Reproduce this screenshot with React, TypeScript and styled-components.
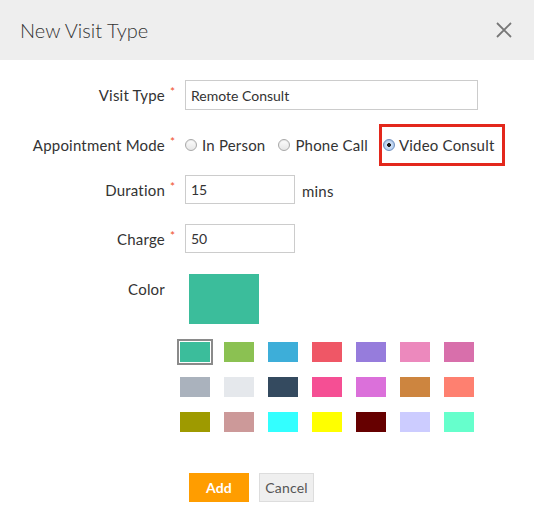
import React, { useState } from "react";
import styled, { createGlobalStyle } from "styled-components";

const GlobalStyle = createGlobalStyle`
  html, body {
    margin: 0;
    padding: 0;
    background: #fff;
  }
  body {
    font-family: Lato, "Open Sans", sans-serif;
    font-size: 15px;
    letter-spacing: 0.2px;
    color: #333;
  }
`;

const Dialog = styled.div`
  width: 534px;
  height: 519px;
  background: #fff;
  overflow: hidden;
`;

const Header = styled.div`
  height: 60px;
  background: #eeeeee;
  display: flex;
  align-items: center;
  justify-content: space-between;
  padding: 0 20px;
  box-sizing: border-box;
`;

const Title = styled.h2`
  margin: 0;
  font-size: 20px;
  font-weight: 300;
  color: #333;
  letter-spacing: 0;
`;

const Close = styled.button`
  width: 18px;
  height: 18px;
  padding: 0;
  margin-right: 1px;
  border: none;
  background: none;
  cursor: pointer;
  display: flex;
  align-items: center;
  justify-content: center;
`;

const Body = styled.div`
  padding-top: 20px;
  display: flex;
  flex-direction: column;
`;

const Row = styled.div<{ $height: number; $gap: number; $top?: boolean }>`
  display: flex;
  align-items: ${(p) => (p.$top ? "flex-start" : "center")};
  height: ${(p) => p.$height}px;
  margin-bottom: ${(p) => p.$gap}px;
`;

const Label = styled.label<{ $top?: boolean }>`
  width: 165px;
  text-align: right;
  line-height: ${(p) => (p.$top ? "30px" : "normal")};
  flex-shrink: 0;
`;

const Star = styled.span`
  width: 20px;
  padding-left: 5px;
  box-sizing: border-box;
  color: #f0502a;
  font-size: 12px;
  align-self: center;
  margin-top: -7px;
  flex-shrink: 0;
`;

const NoStar = styled.span`
  width: 20px;
  flex-shrink: 0;
`;

const TextInput = styled.input<{ $width: number }>`
  width: ${(p) => p.$width}px;
  height: 100%;
  box-sizing: border-box;
  border: 1px solid #cccccc;
  padding: 0 5px;
  font-family: Lato, sans-serif;
  font-size: 14px;
  letter-spacing: 0;
  color: #333;
  outline: none;
`;

const Unit = styled.span`
  margin-left: 7px;
  margin-top: 2px;
`;

const RadioGroup = styled.div`
  display: flex;
  align-items: center;
`;

const RadioOption = styled.label<{ $marked?: boolean }>`
  display: flex;
  align-items: center;
  gap: 5px;
  margin-right: 13px;
  cursor: pointer;
  ${(p) =>
    p.$marked &&
    `
    gap: 4px;
    border: 3px solid #e3281c;
    padding: 9px 7px 9px 1px;
    margin: -7px 0 -6px -2px;
  `}
`;

const RadioDot = styled.span<{ $checked: boolean }>`
  width: 12px;
  height: 12px;
  box-sizing: border-box;
  border-radius: 50%;
  border: 1px solid ${(p) => (p.$checked ? "#6e8fbf" : "#a8a8a8")};
  background: ${(p) =>
    p.$checked
      ? "radial-gradient(circle, #1b1b1b 0 1.6px, #cfe0f6 2.2px, #9fc0ea 100%)"
      : "linear-gradient(#fdfdfd, #e6e6e6)"};
  box-shadow: inset 0 1px 1px rgba(0, 0, 0, 0.08);
  flex-shrink: 0;
`;

const Preview = styled.div<{ $color: string }>`
  width: 70px;
  height: 50px;
  margin-left: 4px;
  background: ${(p) => p.$color};
`;

const Palette = styled.div`
  display: grid;
  grid-template-columns: repeat(7, 30px);
  column-gap: 14px;
  row-gap: 15px;
  padding-left: 180px;
  margin-bottom: 41px;
`;

const Swatch = styled.button<{ $color: string; $selected: boolean }>`
  width: 30px;
  height: 20px;
  padding: 0;
  border: none;
  cursor: pointer;
  background: ${(p) => p.$color};
  box-shadow: ${(p) =>
    p.$selected ? "0 0 0 1px #fff, 0 0 0 3px #8a8a8a" : "none"};
`;

const Actions = styled.div`
  display: flex;
  gap: 10px;
  padding-left: 189px;
`;

const Button = styled.button<{ $primary?: boolean }>`
  height: 29px;
  padding: 0;
  font-family: Lato, sans-serif;
  font-size: 14px;
  letter-spacing: 0.2px;
  cursor: pointer;
  width: ${(p) => (p.$primary ? 60 : 55)}px;
  border: ${(p) => (p.$primary ? "none" : "1px solid #dddddd")};
  background: ${(p) => (p.$primary ? "#ff9d00" : "#efefef")};
  color: ${(p) => (p.$primary ? "#fff" : "#555")};
  font-weight: ${(p) => (p.$primary ? 700 : 400)};
`;

const COLORS = [
  "#3bbd9b", "#8bc152", "#3daed9", "#ef5766", "#967cdc", "#ec89bd", "#d86fab",
  "#aab2bd", "#e5e8ec", "#344a5f", "#f54f94", "#db70da", "#cd853f", "#fe8070",
  "#9e9a00", "#cc9999", "#33ffff", "#ffff00", "#660000", "#ccccff", "#66ffcc",
];

const MODES = ["In Person", "Phone Call", "Video Consult"];

export default function App() {
  const [mode, setMode] = useState("Video Consult");
  const [color, setColor] = useState(COLORS[0]);

  return (
    <Dialog>
      <GlobalStyle />
      <Header>
        <Title>New Visit Type</Title>
        <Close aria-label="Close">
          <svg width="16" height="16" viewBox="0 0 16 16">
            <path d="M1 1L15 15M15 1L1 15" stroke="#777" strokeWidth="1.8" />
          </svg>
        </Close>
      </Header>
      <Body>
        <Row $height={30} $gap={20}>
          <Label>Visit Type</Label>
          <Star>*</Star>
          <TextInput $width={293} defaultValue="Remote Consult" />
        </Row>
        <Row $height={30} $gap={15}>
          <Label>Appointment Mode</Label>
          <Star>*</Star>
          <RadioGroup>
            {MODES.map((m) => (
              <RadioOption
                key={m}
                $marked={m === "Video Consult"}
                onClick={() => setMode(m)}
              >
                <RadioDot $checked={mode === m} />
                {m}
              </RadioOption>
            ))}
          </RadioGroup>
        </Row>
        <Row $height={29} $gap={20}>
          <Label>Duration</Label>
          <Star>*</Star>
          <TextInput $width={110} defaultValue="15" />
          <Unit>mins</Unit>
        </Row>
        <Row $height={29} $gap={21}>
          <Label>Charge</Label>
          <Star>*</Star>
          <TextInput $width={110} defaultValue="50" />
        </Row>
        <Row $height={50} $gap={18} $top>
          <Label $top>Color</Label>
          <NoStar />
          <Preview $color={color} />
        </Row>
        <Palette>
          {COLORS.map((c) => (
            <Swatch
              key={c}
              $color={c}
              $selected={c === color}
              onClick={() => setColor(c)}
            />
          ))}
        </Palette>
        <Actions>
          <Button $primary>Add</Button>
          <Button>Cancel</Button>
        </Actions>
      </Body>
    </Dialog>
  );
}
